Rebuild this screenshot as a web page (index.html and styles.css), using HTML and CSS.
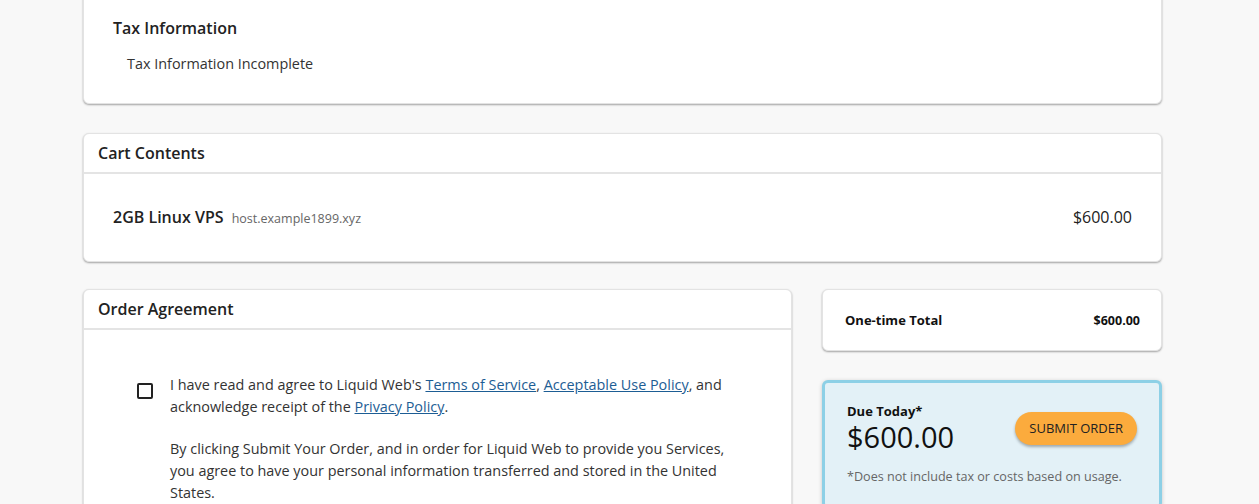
FILE: index.html
```html
<!DOCTYPE html>
<html lang="en">
<head>
<meta charset="utf-8">
<title>Checkout</title>
<link rel="stylesheet" href="styles.css">
</head>
<body>
<div class="page">
  <section class="card tax-card">
    <h2 class="tax-title">Tax Information</h2>
    <p class="tax-status">Tax Information Incomplete</p>
  </section>

  <section class="card">
    <header class="card-header">Cart Contents</header>
    <div class="cart-body">
      <div class="cart-item">
        <div class="item-name">2GB Linux VPS <span class="item-host">host.example1899.xyz</span></div>
        <div class="item-price">$600.00</div>
      </div>
    </div>
  </section>

  <div class="bottom-grid">
    <section class="card agreement-card">
      <header class="card-header">Order Agreement</header>
      <div class="agreement-body">
        <span class="checkbox"></span>
        <div class="agreement-text">
          <p>I have read and agree to Liquid Web's <a href="#">Terms of Service</a>, <a href="#">Acceptable Use Policy</a>, and acknowledge receipt of the <a href="#">Privacy Policy</a>.</p>
          <p>By clicking Submit Your Order, and in order for Liquid Web to provide you Services, you agree to have your personal information transferred and stored in the United States.</p>
        </div>
      </div>
    </section>

    <aside class="summary">
      <section class="card total-card">
        <span>One-time Total</span>
        <span class="total-amount">$600.00</span>
      </section>
      <section class="due-card">
        <div class="due-row">
          <div class="due-info">
            <div class="due-label">Due Today*</div>
            <div class="due-amount">$600.00</div>
          </div>
          <button class="submit-btn">SUBMIT ORDER</button>
        </div>
        <p class="due-note">*Does not include tax or costs based on usage.</p>
      </section>
    </aside>
  </div>
</div>
</body>
</html>
```

FILE: styles.css
```css
* { box-sizing: border-box; }

html, body {
  margin: 0;
  padding: 0;
  background: #f8f8f8;
  font-family: "Open Sans", "Liberation Sans", sans-serif;
  color: #222;
  overflow: hidden;
}

.page {
  width: 1079px;
  margin: -19px 0 0 83px;
  display: flex;
  flex-direction: column;
  gap: 29px;
}

.card {
  background: #fff;
  border: 1px solid #e3e3e3;
  border-radius: 6px;
  box-shadow: 0 1px 2px rgba(0, 0, 0, 0.35);
}

.tax-card {
  padding: 34px 29px 29px;
}

.tax-title {
  margin: 0;
  font-size: 16px;
  font-weight: 600;
  line-height: 24px;
  color: #222;
}

.tax-status {
  margin: 14px 0 0 14px;
  font-size: 14.4px;
  line-height: 20px;
  color: #333;
}

.card-header {
  padding: 7px 14px 7px;
  font-size: 16px;
  font-weight: 600;
  line-height: 24px;
  color: #222;
  border-bottom: 2px solid #e4e4e4;
}

.cart-body {
  padding: 32px 29px 31px;
}

.cart-item {
  display: flex;
  justify-content: space-between;
  align-items: baseline;
}

.item-name {
  font-size: 16px;
  font-weight: 600;
  line-height: 22px;
  color: #222;
}

.item-host {
  margin-left: 4px;
  font-size: 12.5px;
  font-weight: 400;
  color: #666;
}

.item-price {
  font-size: 16px;
  line-height: 22px;
  color: #222;
}

.bottom-grid {
  display: grid;
  grid-template-columns: 1fr 340px;
  gap: 30px;
  align-items: start;
  margin-top: -2px;
}

.agreement-card {
  min-height: 260px;
}

.agreement-body {
  display: flex;
  align-items: flex-start;
  gap: 17px;
  padding: 44px 60px 20px 53px;
}

.checkbox {
  flex: none;
  width: 16px;
  height: 16px;
  margin-top: 9px;
  border: 2px solid #222;
  border-radius: 2px;
}

.agreement-text {
  font-size: 14.4px;
  line-height: 22px;
  color: #333;
}

.agreement-text p {
  margin: 0 0 20px;
}

.agreement-text a {
  color: #1d5d94;
  text-decoration: underline;
}

.summary {
  display: flex;
  flex-direction: column;
  gap: 29px;
}

.total-card {
  display: flex;
  justify-content: space-between;
  align-items: center;
  height: 62px;
  padding: 0 21px 0 22px;
  font-size: 13px;
  font-weight: 700;
  color: #111;
}

.total-amount {
  font-size: 12.5px;
}

.due-card {
  background: #e3f1f7;
  border: 3px solid #8dd0e6;
  border-radius: 6px;
  padding: 19px 22px 20px;
  box-shadow: 0 1px 4px rgba(0, 0, 0, 0.2);
}

.due-row {
  display: flex;
  justify-content: space-between;
  align-items: center;
}

.due-label {
  font-size: 13px;
  font-weight: 700;
  line-height: 18px;
  color: #111;
}

.due-amount {
  font-size: 29px;
  line-height: 34px;
  color: #111;
}

.submit-btn {
  height: 33px;
  padding: 0 14px;
  border: none;
  border-radius: 17px;
  background: #fbab3d;
  color: #222;
  font-family: "Open Sans", "Liberation Sans", sans-serif;
  font-size: 13px;
  box-shadow: 0 2px 3px rgba(0, 0, 0, 0.3);
  cursor: pointer;
}

.due-note {
  margin: 14px 0 0;
  font-size: 12.6px;
  line-height: 18px;
  color: #666;
}
```
